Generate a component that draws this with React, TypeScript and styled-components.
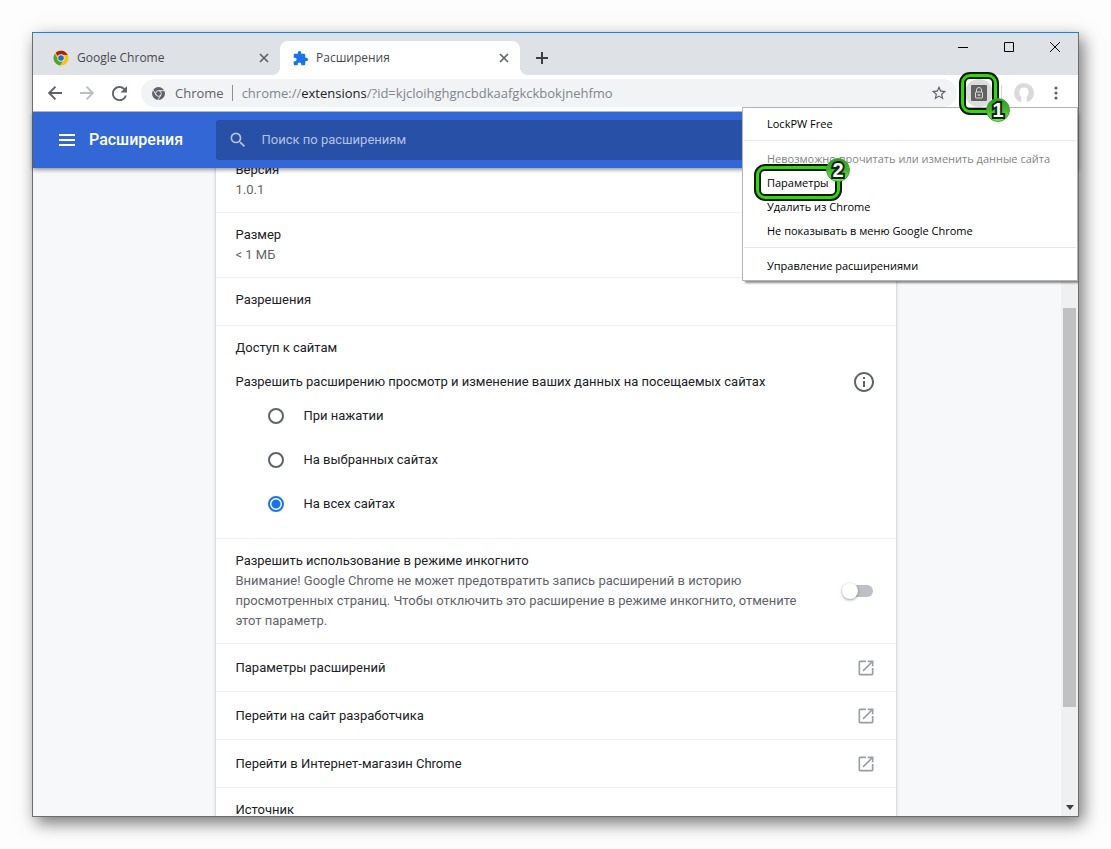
import React from 'react';
import styled, { createGlobalStyle, css } from 'styled-components';

const uiFont = '"Open Sans", "Noto Sans", sans-serif';
const pageFont = 'Roboto, "Noto Sans", sans-serif';

const GlobalStyle = createGlobalStyle`
  *, *::before, *::after { box-sizing: border-box; }
  body { margin: 0; background: #fdfdfd; font-family: ${pageFont}; }
  button, input { font: inherit; color: inherit; margin: 0; }
  button { background: none; border: 0; padding: 0; cursor: pointer; }
  svg { display: block; flex: none; }
`;

const Desktop = styled.div`
  height: 100vh;
  padding: 32px;
`;

const BrowserWindow = styled.div`
  height: 100%;
  display: flex;
  flex-direction: column;
  background: #fff;
  border: 1px solid #6b6d70;
  border-top-color: #1883d7;
  box-shadow: 4px 6px 16px rgba(0, 0, 0, 0.55);
`;

/* Tab strip */
const TabStrip = styled.div`
  flex: none;
  height: 42px;
  display: flex;
  align-items: flex-end;
  padding-left: 7px;
  background: #dee1e6;
`;

const Tab = styled.div<{ $active?: boolean }>`
  position: relative;
  width: 240px;
  height: 34px;
  display: flex;
  align-items: center;
  padding: 0 8px 0 13px;
  gap: 8px;
  border-radius: 8px 8px 0 0;
  font: 12px/16px ${uiFont};
  color: #45494d;
  ${p => p.$active && css`
    background: #fff;
    &::before, &::after {
      content: '';
      position: absolute;
      bottom: 0;
      width: 8px;
      height: 8px;
    }
    &::before { left: -8px; background: radial-gradient(circle at 0 0, #dee1e6 8px, #fff 8px); }
    &::after { right: -8px; background: radial-gradient(circle at 100% 0, #dee1e6 8px, #fff 8px); }
  `}
`;

const TabTitle = styled.span`
  flex: 1;
  white-space: nowrap;
`;

const IconButton = styled.button<{ $size?: number }>`
  flex: none;
  display: grid;
  place-items: center;
  width: ${p => p.$size ?? 16}px;
  height: ${p => p.$size ?? 16}px;
`;

const NewTab = styled(IconButton)`
  margin: 0 0 3px 8px;
`;

const WindowControls = styled.div`
  display: flex;
  align-self: flex-start;
  margin-left: auto;
`;

const WindowControl = styled.button`
  width: 46px;
  height: 28px;
  display: grid;
  place-items: center;
`;

/* Toolbar */
const Toolbar = styled.div`
  position: relative;
  z-index: 3;
  flex: none;
  height: 37px;
  display: flex;
  align-items: center;
  padding: 0 12px 0 12px;
  background: #fff;
  border-bottom: 1px solid #b6b4b6;
`;

const NavButtons = styled.div`
  display: flex;
  gap: 12px;
  margin-right: 12px;
`;

const Omnibox = styled.div`
  flex: 1;
  min-width: 0;
  height: 28px;
  display: flex;
  align-items: center;
  padding: 0 8px 0 11px;
  border-radius: 14px;
  background: #f1f3f4;
  font: 13px/20px ${uiFont};
  color: #5f6368;
`;

const SiteName = styled.span`
  margin-left: 10px;
  padding-right: 8px;
`;

const Url = styled.div`
  flex: 1;
  min-width: 0;
  margin-left: 9px;
  overflow: hidden;
  white-space: nowrap;
  color: #80868b;
  em { font-style: normal; color: #202124; }
`;

const VRule = styled.span<{ $light?: boolean }>`
  width: 1px;
  height: 16px;
  background: ${p => (p.$light ? '#d5d7da' : '#8b8f94')};
`;

const ExtensionButton = styled.button`
  position: relative;
  width: 28px;
  height: 28px;
  margin: 0 8px;
  display: grid;
  place-items: center;
  border-radius: 50%;
  background: #dcdcdc;
`;

const Profile = styled(IconButton)`
  margin: 0 12px;
`;

/* Green call-outs with a numbered badge */
const CallOut = styled.span<{ $kind: 'button' | 'item' }>`
  position: absolute;
  z-index: 2;
  pointer-events: none;
  border: 2px solid #0a1a05;
  border-radius: 11px;
  box-shadow: inset 0 0 0 3px #35d60c, inset 0 0 0 5px #0a1a05;
  ${p => p.$kind === 'button'
    ? css`left: -6px; top: -7px; width: 40px; height: 43px;`
    : css`left: 11px; top: -7px; width: 88px; height: 37px;`}
`;

const Badge = styled.span<{ $kind: 'button' | 'item' }>`
  position: absolute;
  width: 24px;
  height: 24px;
  border-radius: 50%;
  background: linear-gradient(#2f9a24, #46b432 50%, #79ee55);
  border: 1px solid #3fa62c;
  color: #fff;
  font: 700 20px/22px "Liberation Sans", sans-serif;
  text-align: center;
  -webkit-text-stroke: 4px #10240c;
  paint-order: stroke fill;
  ${p => (p.$kind === 'button' ? css`right: -13px; bottom: -9px;` : css`right: -10px; top: -8px;`)}
`;

/* Extension context menu */
const Menu = styled.ul`
  position: absolute;
  z-index: 1;
  top: 32px;
  right: 0;
  width: 336px;
  margin: 0;
  padding: 4px 0 2px;
  list-style: none;
  background: #fff;
  border: 1px solid #b4b4b4;
  box-shadow: 3px 2px 2px rgba(0, 0, 0, 0.45);
  clip-path: inset(0 0 -6px 0);
  font: 11px/24px ${uiFont};
  color: #000;
`;

const MenuItem = styled.li`
  position: relative;
`;

const MenuButton = styled.button`
  display: block;
  width: 100%;
  padding-left: 24px;
  text-align: left;
  white-space: nowrap;
  &:disabled { color: #838383; }
`;

const Separator = styled.li`
  height: 1px;
  margin: 4px 1px 6px;
  background: #e6e6e6;
`;

/* Extensions page */
const PageHeader = styled.header`
  position: relative;
  z-index: 2;
  flex: none;
  height: 56px;
  display: grid;
  grid-template-columns: 1fr minmax(0, 680px) 1fr;
  align-items: center;
  background: #3367d6;
  box-shadow: 0 2px 4px rgba(0, 0, 0, 0.4);
  color: #fff;
`;

const Brand = styled.div`
  display: flex;
  align-items: center;
  gap: 12px;
  padding-left: 24px;
`;

const PageTitle = styled.h1`
  margin: 0;
  font-size: 16px;
  line-height: 24px;
  font-weight: 500;
`;

const SearchBox = styled.label`
  height: 40px;
  display: flex;
  align-items: center;
  gap: 14px;
  padding: 0 12px;
  border-radius: 2px;
  background: #2850a7;
`;

const SearchInput = styled.input`
  flex: 1;
  border: 0;
  padding: 0;
  outline: 0;
  background: none;
  font-size: 13px;
  line-height: 20px;
  &::placeholder { color: #b4c3e3; opacity: 1; }
`;

const Content = styled.main`
  flex: 1;
  min-height: 0;
  overflow: hidden;
  display: grid;
  grid-template-columns: 1fr minmax(0, 680px) 1fr;
  grid-template-rows: minmax(0, 1fr);
  background: #f7f8fa;
`;

/* The card is shown scrolled: its first row runs under the header */
const Card = styled.section`
  grid-column: 2;
  align-self: start;
  margin-top: -20px;
  background: #fff;
  box-shadow: 0 0 0 1px #dcdee0, 0 1px 3px 1px rgba(60, 64, 67, 0.15);
  font-size: 13px;
  line-height: 20px;
  color: #202124;
`;

const Row = styled.div`
  padding: 12px 20px;
  border-bottom: 1px solid #f0f0f1;
`;

const HeadingRow = styled(Row)`
  padding-bottom: 15px;
`;

const LinkRow = styled.a`
  height: 48px;
  display: flex;
  align-items: center;
  justify-content: space-between;
  padding: 0 20px;
  border-bottom: 1px solid #f0f0f1;
  color: inherit;
  text-decoration: none;
`;

const Secondary = styled.span`
  display: block;
  color: #5f6368;
`;

const Fieldset = styled.fieldset`
  margin: 0;
  padding: 0;
  border: 0;
  min-width: 0;
`;

const AccessHead = styled.div`
  display: flex;
  align-items: center;
  justify-content: space-between;
  height: 24px;
  margin: 12px 0 0;
`;

const RadioLabel = styled.label`
  height: 44px;
  display: flex;
  align-items: center;
  gap: 20px;
  padding-left: 32px;
`;

const Radio = styled.input`
  appearance: none;
  width: 16px;
  height: 16px;
  border: 2px solid #5f6368;
  border-radius: 50%;
  &:checked {
    border-color: #1a73e8;
    background: radial-gradient(circle, #1a73e8 4px, #fff 5px);
  }
`;

const IncognitoRow = styled.label`
  display: flex;
  align-items: center;
  justify-content: space-between;
  padding: 12px 23px 12px 20px;
  border-bottom: 1px solid #f0f0f1;
`;

const IncognitoText = styled.span`
  max-width: 572px;
`;

const Toggle = styled.input`
  appearance: none;
  flex: none;
  position: relative;
  width: 28px;
  height: 12px;
  border-radius: 6px;
  background: #bdc1c6;
  &::before {
    content: '';
    position: absolute;
    left: -3px;
    top: -2px;
    width: 16px;
    height: 16px;
    border-radius: 50%;
    background: #fff;
    box-shadow: 0 1px 3px rgba(0, 0, 0, 0.4);
  }
`;

const Scrollbar = styled.div`
  grid-column: 3;
  justify-self: end;
  width: 17px;
  display: flex;
  flex-direction: column;
  align-items: center;
  padding: 140px 0 6px;
  background: #f0f0f1;
`;

const Thumb = styled.div`
  width: 13px;
  height: 399px;
  margin-bottom: auto;
  background: #c1c1c1;
`;

const Close = () => (
  <svg width="10" height="10" viewBox="0 0 10 10" stroke="#5f6368" strokeWidth="1.7" aria-hidden>
    <path d="M1 1l8 8M9 1l-8 8" />
  </svg>
);

const ColorLogo = () => (
  <svg width="16" height="16" viewBox="0 0 16 16" aria-hidden>
    <circle cx="8" cy="8" r="7.5" fill="#f6c416" />
    <path d="M1.6 4.1A7.5 7.5 0 0 0 7.2 15.4L10.4 9.7 6 10z" fill="#4fa32f" />
    <path d="M8 4.700l6.700.3A7.500 7.500 0 0 0 2.600 2.900L5.400 7z" fill="#a81f16" />
    <circle cx="8" cy="8" r="3.7" fill="#dfe8ee" />
    <circle cx="8" cy="8" r="2.8" fill="#2b6cb8" />
  </svg>
);

const GreyLogo = () => (
  <svg width="13" height="13" viewBox="0 0 24 24" aria-hidden>
    <circle cx="12" cy="12" r="12" fill="#5f6368" />
    <g fill="none" stroke="#f1f3f4" strokeWidth="1.6">
      <circle cx="12" cy="12" r="5.2" />
      <path d="M12 6.8h11M7.5 14.6L2 5M16.5 14.6L11 24" />
    </g>
  </svg>
);

const Puzzle = () => (
  <svg width="15" height="15" viewBox="1 1 22 22" fill="#1a73e8" aria-hidden>
    <path d="M20.500 11H19V7c0-1.100-.9-2-2-2h-4V3.500C13 2.120 11.880 1 10.500 1S8 2.120 8 3.500V5H4c-1.100 0-1.990.9-1.990 2v3.800H3.500c1.490 0 2.700 1.210 2.700 2.700s-1.210 2.700-2.700 2.700H2V20c0 1.100.9 2 2 2h3.800v-1.500c0-1.490 1.210-2.700 2.700-2.700s2.700 1.210 2.700 2.700V22H17c1.100 0 2-.9 2-2v-4h1.500c1.380 0 2.500-1.120 2.500-2.500S21.880 11 20.500 11z" />
  </svg>
);

const OpenInNew = () => (
  <svg width="20" height="20" viewBox="0 0 24 24" fill="#9a9fa5" aria-hidden>
    <path d="M19 19H5V5h7V3H5c-1.110 0-2 .9-2 2v14c0 1.100.89 2 2 2h14c1.100 0 2-.9 2-2v-7h-2v7zM14 3v2h3.590l-9.830 9.830 1.410 1.410L19 6.410V10h2V3h-7z" />
  </svg>
);

const accessOptions = ['При нажатии', 'На выбранных сайтах', 'На всех сайтах'];
const links = ['Параметры расширений', 'Перейти на сайт разработчика', 'Перейти в Интернет-магазин Chrome'];

export default function App() {
  return (
    <Desktop>
      <GlobalStyle />
      <BrowserWindow>
        <TabStrip>
          <Tab>
            <ColorLogo />
            <TabTitle>Google Chrome</TabTitle>
            <IconButton aria-label="Закрыть вкладку"><Close /></IconButton>
          </Tab>
          <Tab $active>
            <Puzzle />
            <TabTitle>Расширения</TabTitle>
            <IconButton aria-label="Закрыть вкладку"><Close /></IconButton>
          </Tab>
          <NewTab $size={28} aria-label="Новая вкладка">
            <svg width="12" height="12" viewBox="0 0 12 12" stroke="#3c4043" strokeWidth="2" aria-hidden>
              <path d="M6 0v12M0 6h12" />
            </svg>
          </NewTab>
          <WindowControls>
            <WindowControl aria-label="Свернуть">
              <svg width="10" height="10" viewBox="0 0 10 10" stroke="#000" aria-hidden><path d="M0 5.500h10" /></svg>
            </WindowControl>
            <WindowControl aria-label="Развернуть">
              <svg width="10" height="10" viewBox="0 0 10 10" stroke="#000" fill="none" aria-hidden><path d="M.5.5h9v9h-9z" /></svg>
            </WindowControl>
            <WindowControl aria-label="Закрыть">
              <svg width="10" height="10" viewBox="0 0 10 10" stroke="#000" aria-hidden><path d="M0 0l10 10M10 0L0 10" /></svg>
            </WindowControl>
          </WindowControls>
        </TabStrip>

        <Toolbar>
          <NavButtons>
            <IconButton $size={20} aria-label="Назад">
              <svg width="14" height="14" viewBox="0 0 14 14" stroke="#5f6368" strokeWidth="1.900" fill="none" aria-hidden>
                <path d="M14 7H1.500M7.500.7L1.200 7l6.300 6.300" />
              </svg>
            </IconButton>
            <IconButton $size={20} aria-label="Вперёд">
              <svg width="14" height="14" viewBox="0 0 14 14" stroke="#bcbec1" strokeWidth="1.900" fill="none" aria-hidden>
                <path d="M0 7h12.500M6.500.7L12.800 7l-6.300 6.300" />
              </svg>
            </IconButton>
            <IconButton $size={20} aria-label="Обновить">
              <svg width="15" height="15" viewBox="4 4 16 16" fill="#5f6368" aria-hidden>
                <path d="M17.650 6.350A7.958 7.958 0 0 0 12 4c-4.420 0-7.990 3.580-7.990 8s3.570 8 7.990 8c3.730 0 6.840-2.550 7.730-6h-2.080A5.990 5.990 0 0 1 12 18c-3.310 0-6-2.690-6-6s2.690-6 6-6c1.660 0 3.140.69 4.220 1.780L13 11h7V4l-2.350 2.350z" />
              </svg>
            </IconButton>
          </NavButtons>
          <Omnibox>
            <GreyLogo />
            <SiteName>Chrome</SiteName>
            <VRule />
            <Url role="textbox" aria-label="Адресная строка">
              chrome://<em>extensions</em>/?id=kjcloihghgncbdkaafgkckbokjnehfmo
            </Url>
            <IconButton $size={20} aria-label="Добавить в закладки">
              <svg width="16" height="16" viewBox="1 1 22 22" fill="#5f6368" aria-hidden>
                <path d="M22 9.240l-7.190-.62L12 2 9.190 8.630 2 9.240l5.460 4.730L5.820 21 12 17.270 18.180 21l-1.630-7.030L22 9.240zM12 15.400l-3.760 2.270 1-4.280-3.320-2.880 4.380-.38L12 6.100l1.710 4.040 4.380.38-3.320 2.880 1 4.280L12 15.400z" />
              </svg>
            </IconButton>
          </Omnibox>
          <ExtensionButton aria-label="LockPW Free">
            <svg width="16" height="16" viewBox="0 0 16 16" aria-hidden>
              <rect width="16" height="16" rx="1" fill="#626262" />
              <g fill="none" stroke="#d8d8d8">
                <rect x="4.500" y="7" width="7" height="6" rx=".5" />
                <path d="M5.500 7V5a2.500 2.500 0 0 1 5 0v2M8 9v2M6.500 10h3" />
              </g>
            </svg>
            <CallOut $kind="button"><Badge $kind="button">1</Badge></CallOut>
          </ExtensionButton>
          <VRule $light />
          <Profile $size={20} aria-label="Профиль">
            <svg width="20" height="20" viewBox="0 0 20 20" aria-hidden>
              <circle cx="10" cy="10" r="10" fill="#dadada" />
              <path d="M10 4.500c3.200 0 4.800 2 4.600 5-.2 2.200-1 3.600-1.900 4.500L12.500 17l1 2.400a10 10 0 0 1-7 0l1-2.400-.2-3c-.9-.9-1.700-2.300-1.900-4.500-.2-3 1.400-5 4.600-5z" fill="#fff" />
            </svg>
          </Profile>
          <IconButton $size={20} aria-label="Меню">
            <svg width="4" height="14" viewBox="0 0 4 14" fill="#5f6368" aria-hidden>
              <circle cx="2" cy="2" r="1.600" /><circle cx="2" cy="7" r="1.600" /><circle cx="2" cy="12" r="1.600" />
            </svg>
          </IconButton>
          <Menu>
            <MenuItem><MenuButton>LockPW Free</MenuButton></MenuItem>
            <Separator />
            <MenuItem><MenuButton disabled>Невозможно прочитать или изменить данные сайта</MenuButton></MenuItem>
            <MenuItem>
              <MenuButton>Параметры</MenuButton>
              <CallOut $kind="item"><Badge $kind="item">2</Badge></CallOut>
            </MenuItem>
            <MenuItem><MenuButton>Удалить из Chrome</MenuButton></MenuItem>
            <MenuItem><MenuButton>Не показывать в меню Google Chrome</MenuButton></MenuItem>
            <Separator />
            <MenuItem><MenuButton>Управление расширениями</MenuButton></MenuItem>
          </Menu>
        </Toolbar>

        <PageHeader>
          <Brand>
            <IconButton $size={20} aria-label="Главное меню">
              <svg width="16" height="12" viewBox="0 0 16 12" fill="#fff" aria-hidden>
                <path d="M0 0h16v2H0zM0 5h16v2H0zM0 10h16v2H0z" />
              </svg>
            </IconButton>
            <PageTitle>Расширения</PageTitle>
          </Brand>
          <SearchBox>
            <svg width="20" height="20" viewBox="0 0 24 24" fill="#b4c3e3" aria-hidden>
              <path d="M15.500 14h-.79l-.28-.27A6.471 6.471 0 0 0 16 9.500 6.500 6.500 0 1 0 9.500 16c1.610 0 3.090-.59 4.230-1.570l.27.28v.79l5 4.990L20.490 19l-4.990-5zm-6 0C7.010 14 5 11.990 5 9.500S7.010 5 9.500 5 14 7.010 14 9.500 11.990 14 9.500 14z" />
            </svg>
            <SearchInput type="search" placeholder="Поиск по расширениям" aria-label="Поиск по расширениям" />
          </SearchBox>
        </PageHeader>

        <Content>
          <Card>
            <Row>Версия<Secondary>1.0.1</Secondary></Row>
            <Row>Размер<Secondary>&lt; 1 МБ</Secondary></Row>
            <HeadingRow>Разрешения</HeadingRow>
            <Row>
              <div>Доступ к сайтам</div>
              <Fieldset aria-labelledby="access">
                <AccessHead>
                  <span id="access">Разрешить расширению просмотр и изменение ваших данных на посещаемых сайтах</span>
                  <IconButton $size={24} aria-label="Подробнее">
                    <svg width="24" height="24" viewBox="0 0 24 24" fill="#5f6368" aria-hidden>
                      <path d="M11 17h2v-6h-2v6zm1-15C6.480 2 2 6.480 2 12s4.480 10 10 10 10-4.480 10-10S17.520 2 12 2zm0 18c-4.410 0-8-3.590-8-8s3.590-8 8-8 8 3.590 8 8-3.590 8-8 8zM11 9h2V7h-2v2z" />
                    </svg>
                  </IconButton>
                </AccessHead>
                {accessOptions.map((label, i) => (
                  <RadioLabel key={label}>
                    <Radio type="radio" name="site-access" defaultChecked={i === 2} />
                    {label}
                  </RadioLabel>
                ))}
              </Fieldset>
            </Row>
            <IncognitoRow>
              <IncognitoText>
                Разрешить использование в режиме инкогнито
                <Secondary>
                  Внимание! Google Chrome не может предотвратить запись расширений в историю просмотренных страниц. Чтобы отключить это расширение в режиме инкогнито, отмените этот параметр.
                </Secondary>
              </IncognitoText>
              <Toggle type="checkbox" role="switch" />
            </IncognitoRow>
            {links.map(label => (
              <LinkRow key={label} href="#">{label}<OpenInNew /></LinkRow>
            ))}
            <Row>Источник</Row>
          </Card>
          <Scrollbar>
            <Thumb />
            <svg width="8" height="5" viewBox="0 0 8 5" fill="#404040" aria-hidden><path d="M0 0h8L4 5z" /></svg>
          </Scrollbar>
        </Content>
      </BrowserWindow>
    </Desktop>
  );
}
